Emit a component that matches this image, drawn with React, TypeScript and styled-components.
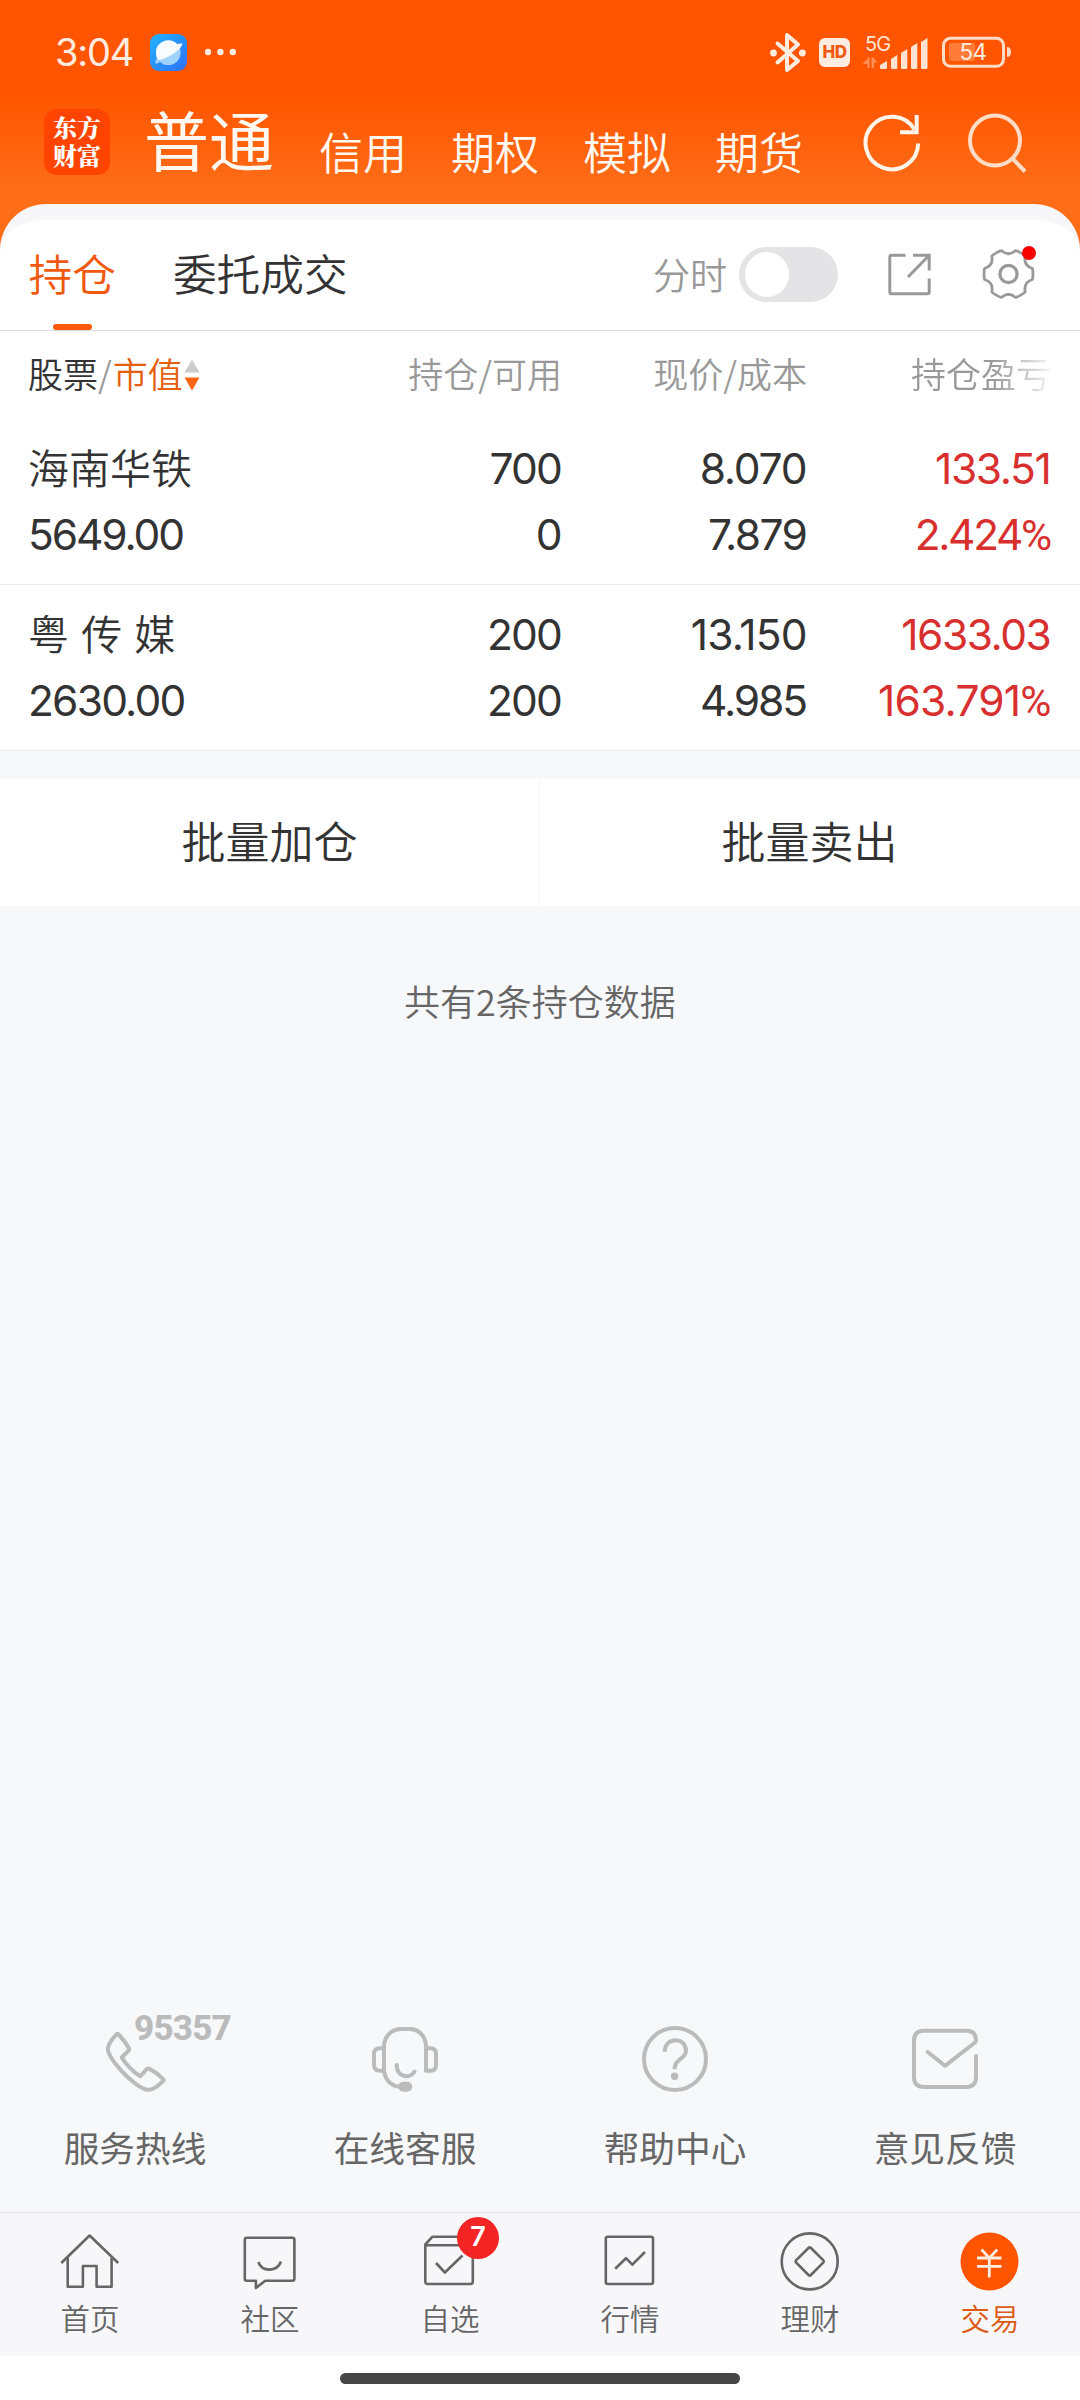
import React from 'react';
import styled, { createGlobalStyle } from 'styled-components';

const CJK = '"Noto Sans CJK SC", "Noto Sans", sans-serif';
const NUM = 'Inter, "Noto Sans CJK SC", sans-serif';

const GlobalStyle = createGlobalStyle`
  *, *::before, *::after { box-sizing: border-box; }
  body { margin: 0; background: #fff; }
  svg { display: block; flex: none; }
`;

const Screen = styled.div`
  width: 1080px;
  height: 2400px;
  display: flex;
  flex-direction: column;
  overflow: hidden;
  font-family: ${CJK};
  font-weight: 350;
  color: #333;
  background: linear-gradient(180deg, #ff5500 0, #ff5500 94px, #ff6d18 190px, #ff6d18 280px, #f7f8fa 280px);
`;

/* ---------- status bar ---------- */

const StatusBar = styled.div`
  height: 94px;
  padding: 10px 68px 0 55px;
  display: flex;
  align-items: center;
  justify-content: space-between;
  color: #ffece0;
`;

const StatusGroup = styled.div`
  display: flex;
  align-items: center;
`;

const Clock = styled.span`
  width: 95px;
  font: 400 38px/44px ${NUM};
  letter-spacing: -1.2px;
`;

const DotsSlot = styled.span`
  margin-left: 16px;
`;

const HdBadge = styled.span`
  width: 31px;
  height: 29px;
  margin: 0 12px 0 12px;
  border-radius: 6px;
  background: #ffece0;
  color: #f05a10;
  font: 800 17px/29px ${NUM};
  letter-spacing: -0.6px;
  text-align: center;
`;

const BatterySlot = styled.span`
  margin-left: 12px;
`;

/* ---------- title bar ---------- */

const TitleBar = styled.header`
  height: 110px;
  padding: 0 52px 0 44px;
  display: flex;
  align-items: flex-start;
`;

const Logo = styled.div`
  width: 66px;
  height: 66px;
  margin-top: 15px;
  padding: 4px 9px 0;
  border-radius: 13px;
  background: #ff4400;
  color: #fff;
  font: 900 24px/28px "Noto Serif CJK SC", ${CJK};
  word-break: break-all;
`;

const AccountTabs = styled.nav`
  display: flex;
  align-items: flex-start;
  margin-left: 34px;
  gap: 44px;
  color: #fff8f0;
`;

const AccountTab = styled.span<{ $active?: boolean }>`
  margin: ${(p) => (p.$active ? '-4px 1px 0 0' : '9px 0 0')};
  font-size: ${(p) => (p.$active ? 65 : 44)}px;
  font-weight: ${(p) => (p.$active ? 400 : 350)};
  line-height: 96px;
  white-space: nowrap;
`;

const TitleActions = styled.div`
  display: flex;
  gap: 44px;
  margin: 18px 0 0 auto;
`;

/* ---------- holdings panel ---------- */

const Panel = styled.section`
  border-radius: 46px 46px 0 0;
  border-top: 16px solid #f7f7f9;
  background: #fff;
`;

const TabRow = styled.div`
  height: 111px;
  padding: 0 44px 0 28.5px;
  border-bottom: 1px solid #dcdcdc;
  display: flex;
  align-items: center;
`;

const Tab = styled.div<{ $active?: boolean }>`
  height: 110px;
  margin-right: 57px;
  font-size: 43.7px;
  line-height: 104px;
  color: ${(p) => (p.$active ? '#f0590f' : '#333')};
  display: flex;
  flex-direction: column;
  align-items: center;
  justify-content: space-between;
  &::after {
    content: '';
    width: 39px;
    height: 6px;
    border-radius: 3px;
    background: ${(p) => (p.$active ? '#fb5a0c' : 'transparent')};
  }
`;

const TabTools = styled.div`
  margin: -2px 0 0 auto;
  display: flex;
  align-items: center;
  color: #999;
`;

const ToolLabel = styled.span`
  font-size: 37px;
  line-height: 48px;
  margin: -1px 12px 0 0;
`;

const Toggle = styled.span`
  width: 99px;
  height: 55px;
  padding: 5px 6px;
  border-radius: 28px;
  background: #e4e4e6;
  &::before {
    content: '';
    display: block;
    width: 44px;
    height: 45px;
    border-radius: 50%;
    background: #fff;
  }
`;

const ExportSlot = styled.span`
  margin: 0 48px 0 48px;
`;

const GearSlot = styled.span`
  position: relative;
  &::after {
    content: '';
    position: absolute;
    right: 0;
    top: -1px;
    width: 14px;
    height: 14px;
    border-radius: 50%;
    background: #f60000;
  }
`;

const columns = '300px 234px 245px 1fr';

const HeadRow = styled.div`
  height: 88px;
  padding: 0 29px 0 28px;
  display: grid;
  grid-template-columns: ${columns};
  align-items: start;
  font-size: 35px;
  line-height: 83px;
  color: #999;
`;

const HeadCell = styled.div<{ $fade?: boolean }>`
  white-space: nowrap;
  overflow: hidden;
  text-align: ${(p) => (p.$fade ? 'left' : 'right')};
  ${(p) =>
    p.$fade &&
    `padding-left: 104px;
     -webkit-mask-image: linear-gradient(90deg, #000 185px, transparent 252px);
     mask-image: linear-gradient(90deg, #000 185px, transparent 252px);`}
`;

const SortCell = styled.div`
  display: flex;
  align-items: center;
  white-space: nowrap;
`;

const Dark = styled.span`
  color: #333;
`;

const Sorted = styled.span`
  color: #e4600f;
  margin: 0 1px;
`;

const SortSlot = styled.span`
  margin-top: 4px;
`;

const HoldingRow = styled.div`
  height: 166px;
  padding: 16px 29px 0 28px;
  border-bottom: 1px solid #ebebeb;
  display: grid;
  grid-template-columns: ${columns};
  grid-auto-rows: 66px;
`;

const StockName = styled.div`
  font-size: 41px;
  line-height: 63px;
  word-spacing: 3px;
  white-space: pre;
`;

const Num = styled.div<{ $track: number; $left?: boolean; $gain?: boolean }>`
  font: 370 42.5px/68px ${NUM};
  letter-spacing: ${(p) => p.$track}px;
  padding-right: ${(p) => (p.$left ? 0 : -p.$track * 0.5)}px;
  text-align: ${(p) => (p.$left ? 'left' : 'right')};
  color: ${(p) => (p.$gain ? '#d7302f' : '#333')};
  white-space: nowrap;
`;

const Percent = styled.span`
  font-family: Roboto, sans-serif;
  font-weight: 400;
`;

/* ---------- below the table ---------- */

const Body = styled.main`
  flex: 1;
  padding-top: 28px;
  background: #f7f8fa;
  display: flex;
  flex-direction: column;
`;

const BatchRow = styled.div`
  height: 127px;
  background: #fff;
  display: grid;
  grid-template-columns: 540px 540px;
`;

const BatchButton = styled.button`
  border: 0;
  border-right: 1px solid #f5f5f5;
  padding: 0 0 5px;
  background: none;
  color: #333;
  font: 350 44px/120px ${CJK};
  height: 127px;
  &:last-child {
    border-right-color: transparent;
  }
`;

const Summary = styled.p`
  margin: 68px 0 0;
  font-size: 36px;
  line-height: 52px;
  text-align: center;
  color: #666;
`;

const Services = styled.div`
  margin-top: auto;
  height: 186px;
  display: grid;
  grid-template-columns: repeat(4, 270px);
`;

const Service = styled.div`
  display: flex;
  flex-direction: column;
  align-items: center;
  font-size: 35.7px;
  line-height: 52px;
  font-weight: 400;
  color: #666;
`;

const ServiceIcon = styled.div`
  position: relative;
  height: 66px;
  margin-bottom: 29px;
`;

const Hotline = styled.span`
  position: absolute;
  left: 32px;
  top: -13px;
  font: 800 35px/32px Roboto, sans-serif;
  letter-spacing: -0.8px;
  color: #bbb;
`;

/* ---------- bottom navigation ---------- */

const BottomNav = styled.nav`
  height: 144px;
  padding-top: 19px;
  border-top: 1px solid #e2e2e4;
  background: #f7f7fa;
  display: grid;
  grid-template-columns: repeat(6, 180px);
`;

const NavItem = styled.div<{ $active?: boolean }>`
  display: flex;
  flex-direction: column;
  align-items: center;
  font-size: 29.5px;
  line-height: 40px;
  color: ${(p) => (p.$active ? '#dc5a14' : '#666')};
`;

const NavIcon = styled.div`
  position: relative;
  height: 60px;
  margin-bottom: 5px;
`;

const Badge = styled.span`
  position: absolute;
  left: 37px;
  top: -15px;
  width: 42px;
  height: 42px;
  border-radius: 50%;
  background: #f22424;
  color: #fff;
  font: 600 27px/40px ${NUM};
  text-align: center;
`;

const HomeArea = styled.div`
  height: 44px;
  padding-top: 17px;
  background: #fff;
  display: flex;
  justify-content: center;
`;

const HomeBar = styled.span`
  width: 400px;
  height: 11px;
  border-radius: 6px;
  background: #464646;
`;

/* ---------- drawings ---------- */

const BrowserIcon = () => (
  <svg width="37" height="37" viewBox="0 0 37 37">
    <defs>
      <linearGradient id="bg" x1="0" y1="0" x2="1" y2="1">
        <stop offset="0" stopColor="#22b4ff" />
        <stop offset="1" stopColor="#2f6ff8" />
      </linearGradient>
    </defs>
    <rect width="37" height="37" rx="9" fill="url(#bg)" />
    <circle cx="18.3" cy="18.7" r="12.3" fill="#9fd2ff" />
    <path d="M6 18.700 A12.300 12.300 0 0 1 27 10 L32.300 9.200 Q32.500 13.500 24.500 19 Q15 25.500 7.500 26 Q6 22 6 18.700Z" fill="#fff" opacity=".92" />
    <path d="M7 24 L10 28 Q7.500 29.500 5.500 30 Q4.800 27 7 24Z" fill="#9fd2ff" />
  </svg>
);

const Dots = () => (
  <svg width="36" height="8" viewBox="0 0 36 8" fill="#ffece0">
    <circle cx="5" cy="4" r="3.200" />
    <circle cx="17.4" cy="4" r="3.200" />
    <circle cx="29.8" cy="4" r="3.200" />
  </svg>
);

const Bluetooth = () => (
  <svg width="38" height="42" viewBox="0 0 38 42" fill="none" stroke="#ffece0" strokeWidth="4" strokeLinejoin="round" strokeLinecap="round">
    <path d="M8.5 12.5 L29 30 L18 39 V4 L29 13.5 L8.5 31.5" />
    <circle cx="4.5" cy="22" r="3.4" fill="#ffece0" stroke="none" />
    <circle cx="33.4" cy="22" r="3.4" fill="#ffece0" stroke="none" />
  </svg>
);

const Signal = () => (
  <svg width="68" height="48" viewBox="0 -6 68 48" fill="#ffe3d2">
    <text x="3" y="16.500" fontFamily="Inter" fontWeight="400" fontSize="20" letterSpacing="-.8">5G</text>
    <g fill="#ff8f57">
      <path d="M5.500 23.500 H7.500 V34 H5.500 V30 L0.500 29.500 L5.500 25Z" />
      <path d="M9.500 23.500 H11.500 L15.500 28.500 H12 V34 H9.500Z" />
    </g>
    <path d="M18 31 L25 27 V33.500 Q25 35 23.500 35 H19.500 Q18 35 18 33.500Z" />
    <path d="M29 25 L35.300 21 V33.500 Q35.300 35 34 35 H30.500 Q29 35 29 33.500Z" />
    <path d="M39 19 L45.300 15 V33.500 Q45.300 35 44 35 H40.500 Q39 35 39 33.500Z" />
    <path d="M49 13 L55.300 9 V33.500 Q55.300 35 54 35 H50.500 Q49 35 49 33.500Z" />
    <path d="M59 8 L65.500 4 V33.500 Q65.500 35 64 35 H60.500 Q59 35 59 33.500Z" />
  </svg>
);

const Battery = () => (
  <svg width="70" height="32" viewBox="0 0 70 32">
    <rect x="1.500" y="2.300" width="60" height="28" rx="7" fill="none" stroke="#ffdcc8" strokeWidth="3" />
    <path d="M65 11 Q69 11 69 16 Q69 21 65 21Z" fill="#ffdcc8" />
    <rect x="7" y="7" width="26" height="18" rx="2" fill="#ff7c38" />
    <text x="31" y="24.300" textAnchor="middle" fontFamily="Inter" fontWeight="400" fontSize="22.500" letterSpacing="-.5" fill="#ffece0">54</text>
  </svg>
);

const Refresh = () => (
  <svg width="60" height="60" viewBox="0 0 60 60" fill="none" stroke="#fff4ea" strokeWidth="4">
    <path d="M56.200 31.500 A26.300 26.300 0 1 1 52.500 17.500" />
    <path d="M54.700 3 V20.300 H38" />
  </svg>
);

const Search = () => (
  <svg width="62" height="62" viewBox="0 0 62 62" fill="none" stroke="#ffdcc6" strokeWidth="4">
    <circle cx="29" cy="28.500" r="25" />
    <path d="M46.500 46.500 L59 59.500" />
  </svg>
);

const SortArrows = () => (
  <svg width="16" height="32" viewBox="0 0 16 32">
    <path d="M8 0.500 L15.500 13.500 H0.500Z" fill="#ccc" />
    <path d="M8 31.500 L15.500 18.500 H0.500Z" fill="#fa6414" />
  </svg>
);

const Export = () => (
  <svg width="48" height="48" viewBox="0 0 48 48" fill="none" stroke="#999" strokeWidth="3">
    <path d="M19.500 5.300H5.500q-1.700 0-1.700 1.700V42q0 1.700 1.700 1.700H41.500q1.700 0 1.700-1.700V28.500" />
    <path d="M27 5.300H43.200V20.500M43 5.500L22 27" />
  </svg>
);

const gearPoint = (deg: number, r: number) => {
  const a = (deg * Math.PI) / 180;
  return `${(26.5 + r * Math.cos(a)).toFixed(2)} ${(27 + r * Math.sin(a)).toFixed(2)}`;
};
const gearPath =
  `M${gearPoint(-13, 24.5)}` +
  [0, 60, 120, 180, 240, 300]
    .map((d) => `Q${gearPoint(d - 8, 24.8)} ${gearPoint(d, 24.4)} Q${gearPoint(d + 8, 24.8)} ${gearPoint(d + 13, 24.5)} Q${gearPoint(d + 30, 17)} ${gearPoint(d + 47, 24.5)}`)
    .join('') +
  'Z';

const Gear = () => (
  <svg width="54" height="54" viewBox="0 0 54 54" fill="none" stroke="#999" strokeWidth="2.800" strokeLinejoin="round">
    <path d={gearPath} />
    <circle cx="26.500" cy="27" r="8.600" strokeWidth="3.200" />
  </svg>
);

const ServiceSvg = ({ children }: { children: React.ReactNode }) => (
  <svg width="66" height="66" viewBox="0 0 66 66" fill="none" stroke="#bbb" strokeWidth="4" strokeLinecap="round" strokeLinejoin="round">
    {children}
  </svg>
);

const Phone = () => (
  <ServiceSvg>
    <path d="M14.600 8.300 Q15.600 7.300 16.600 8.500 Q22.500 14.500 26.800 22 Q27.700 23.500 26.500 24.700 L19.800 31.500 Q26.500 42.500 38.200 50.300 L44.800 43.200 Q46 42 47.500 42.900 Q55.500 47 61 53 Q62 54.200 60.900 55.200 Q52.500 63.800 47 63.800 Q40 64.500 24.500 50 Q8.500 34 6 24.500 Q5 18 14.600 8.300Z" />
  </ServiceSvg>
);

const Headset = () => (
  <ServiceSvg>
    <path d="M27.500 60.700 C17 59.500 12 51 12 43 V21 C12 10 20 3 29 3 H37.500 C46.500 3 54 10 54 21 V44.700 H58.500 Q64 44.700 64 39 V28 Q64 22.300 58.500 22.300 H54" />
    <path d="M12 22.300 H8 Q2 22.300 2 28 V39 Q2 44.700 8 44.700 H12" />
    <path d="M24.700 39 C24.700 51 37.500 53.500 42.600 45.700" />
    <rect x="26.400" y="55.700" width="13.800" height="10" rx="5" fill="#bbb" stroke="none" />
  </ServiceSvg>
);

const Help = () => (
  <ServiceSvg>
    <circle cx="33" cy="33" r="31" />
    <path strokeLinecap="butt" d="M22.700 25.800 C22.700 10.500 44 10.500 44 25 C44 33 32.500 32.500 32.500 43.300" />
    <circle cx="32.600" cy="50.300" r="3.700" fill="#bbb" stroke="none" />
  </ServiceSvg>
);

const Mail = () => (
  <ServiceSvg>
    <path d="M64 30 V51 Q64 61 54 61 H12 Q2 61 2 51 V14.700 Q2 4.700 12 4.700 H54 Q64 4.700 64 14 Q64 15.500 63 16.500 L33 39.800 L15.700 26" />
  </ServiceSvg>
);

const NavSvg = ({ children }: { children: React.ReactNode }) => (
  <svg width="60" height="60" viewBox="0 0 60 60" fill="none" stroke="#666" strokeWidth="2.600" strokeLinejoin="round">
    {children}
  </svg>
);

const HomeIcon = () => (
  <NavSvg>
    <path d="M1.300 31 L29.600 3.500 L58.200 31" />
    <path d="M7.700 26 V54.700 H22.900 V34 H36.600 V54.700 H51.600 V26" />
  </NavSvg>
);

const Community = () => (
  <NavSvg>
    <path d="M6.800 5.700 H52.400 Q54.400 5.700 54.400 7.700 V46.700 Q54.400 48.700 52.400 48.700 H25.200 L15.900 56 V48.700 H6.800 Q4.800 48.700 4.800 46.700 V7.700 Q4.800 5.700 6.800 5.700Z" />
    <path d="M18.300 30 C22 40.200 37 40.200 41 29.500" />
  </NavSvg>
);

const Watchlist = () => (
  <NavSvg>
    <path d="M5.300 12.500 L12.500 4.700 H45.600 L52.800 12.500 V49.500 Q52.800 52 50.500 52 H7.600 Q5.300 52 5.300 49.500Z M5.300 13.300 H52.800" />
    <path d="M16 31 L24.900 40.500 L42.500 23.500" />
  </NavSvg>
);

const Market = () => (
  <NavSvg>
    <rect x="5.800" y="4.700" width="47.200" height="47.300" rx="2" />
    <path d="M15.200 36.700 L26 26.200 L32.300 32.700 L45 20" />
  </NavSvg>
);

const Wealth = () => (
  <NavSvg>
    <circle cx="29.700" cy="29.400" r="28" />
    <path d="M28.500 16 Q29.700 14.800 30.900 16 L43.200 28.200 Q44.400 29.400 43.200 30.600 L30.900 43 Q29.700 44.200 28.500 43 L16.200 30.600 Q15 29.400 16.200 28.200Z" />
  </NavSvg>
);

const Trade = () => (
  <svg width="60" height="60" viewBox="0 0 60 60" fill="none" stroke="#ffece0" strokeWidth="2.800">
    <circle cx="29.500" cy="29.500" r="29" fill="#ff5500" stroke="none" />
    <path d="M21.500 17.500 L29.300 26 L37.300 17.500 M29.300 26 V45.500 M17 26 H41.500 M17 34.400 H41.500" />
  </svg>
);

/* ---------- data ---------- */

type Cell = { text: string; track: number; left?: boolean; gain?: boolean; percent?: boolean };

const holdings: { name: string; cells: Cell[] }[] = [
  {
    name: '海南华铁',
    cells: [
      { text: '700', track: -1.8 },
      { text: '8.070', track: -1.2 },
      { text: '133.51', track: -1.4, gain: true },
      { text: '5649.00', track: -2.1, left: true },
      { text: '0', track: -1.2 },
      { text: '7.879', track: -1.6 },
      { text: '2.424', track: -2.4, gain: true, percent: true },
    ],
  },
  {
    name: '粤 传 媒',
    cells: [
      { text: '200', track: -1.8 },
      { text: '13.150', track: -0.9 },
      { text: '1633.03', track: -1.5, gain: true },
      { text: '2630.00', track: -1.8, left: true },
      { text: '200', track: -1.8 },
      { text: '4.985', track: -2.1 },
      { text: '163.791', track: -0.8, gain: true, percent: true },
    ],
  },
];

const services = [
  { label: '服务热线', icon: <Phone />, extra: '95357' },
  { label: '在线客服', icon: <Headset /> },
  { label: '帮助中心', icon: <Help /> },
  { label: '意见反馈', icon: <Mail /> },
];

const navItems = [
  { label: '首页', icon: <HomeIcon /> },
  { label: '社区', icon: <Community /> },
  { label: '自选', icon: <Watchlist />, badge: 7 },
  { label: '行情', icon: <Market /> },
  { label: '理财', icon: <Wealth /> },
  { label: '交易', icon: <Trade />, active: true },
];

export default function App() {
  return (
    <Screen>
      <GlobalStyle />
      <StatusBar>
        <StatusGroup>
          <Clock>3:04</Clock>
          <BrowserIcon />
          <DotsSlot>
            <Dots />
          </DotsSlot>
        </StatusGroup>
        <StatusGroup>
          <Bluetooth />
          <HdBadge>HD</HdBadge>
          <Signal />
          <BatterySlot>
            <Battery />
          </BatterySlot>
        </StatusGroup>
      </StatusBar>

      <TitleBar>
        <Logo>东方财富</Logo>
        <AccountTabs>
          <AccountTab $active>普通</AccountTab>
          {['信用', '期权', '模拟', '期货'].map((t) => (
            <AccountTab key={t}>{t}</AccountTab>
          ))}
        </AccountTabs>
        <TitleActions>
          <Refresh />
          <Search />
        </TitleActions>
      </TitleBar>

      <Panel>
        <TabRow>
          <Tab $active>持仓</Tab>
          <Tab>委托成交</Tab>
          <TabTools>
            <ToolLabel>分时</ToolLabel>
            <Toggle />
            <ExportSlot>
              <Export />
            </ExportSlot>
            <GearSlot>
              <Gear />
            </GearSlot>
          </TabTools>
        </TabRow>
        <HeadRow>
          <SortCell>
            <Dark>股票</Dark>/<Sorted>市值</Sorted>
            <SortSlot>
              <SortArrows />
            </SortSlot>
          </SortCell>
          <HeadCell>持仓/可用</HeadCell>
          <HeadCell>现价/成本</HeadCell>
          <HeadCell $fade>持仓盈亏</HeadCell>
        </HeadRow>
        {holdings.map((h) => (
          <HoldingRow key={h.name}>
            <StockName>{h.name}</StockName>
            {h.cells.map((c, i) => (
              <Num key={i} $track={c.track} $left={c.left} $gain={c.gain}>
                {c.text}
                {c.percent && <Percent>%</Percent>}
              </Num>
            ))}
          </HoldingRow>
        ))}
      </Panel>

      <Body>
        <BatchRow>
          <BatchButton>批量加仓</BatchButton>
          <BatchButton>批量卖出</BatchButton>
        </BatchRow>
        <Summary>共有2条持仓数据</Summary>
        <Services>
          {services.map((s) => (
            <Service key={s.label}>
              <ServiceIcon>
                {s.icon}
                {s.extra && <Hotline>{s.extra}</Hotline>}
              </ServiceIcon>
              {s.label}
            </Service>
          ))}
        </Services>
      </Body>

      <BottomNav>
        {navItems.map((n) => (
          <NavItem key={n.label} $active={n.active}>
            <NavIcon>
              {n.icon}
              {n.badge && <Badge>{n.badge}</Badge>}
            </NavIcon>
            {n.label}
          </NavItem>
        ))}
      </BottomNav>
      <HomeArea>
        <HomeBar />
      </HomeArea>
    </Screen>
  );
}
